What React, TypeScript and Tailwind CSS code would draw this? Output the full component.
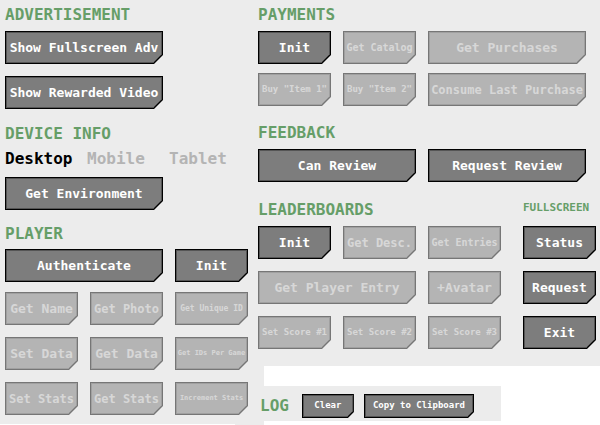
import React from "react";
import clsx from "clsx";

type Size = "md" | "sm" | "xs" | "2xs" | "3xs" | "4xs";

const textSizes: Record<Size, string> = {
  md: "text-[13px]",
  sm: "text-[12px]",
  xs: "text-[10px]",
  "2xs": "text-[9px]",
  "3xs": "text-[8px]",
  "4xs": "text-[7px]",
};

type ActionProps = {
  children: React.ReactNode;
  size?: Size;
  wide?: boolean;
  disabled?: boolean;
  compact?: boolean;
};

// Button with its bottom right corner cut off: the outer shape is the outline, the inner one the fill.
function Action({ children, size = "md", wide, disabled, compact }: ActionProps) {
  return (
    <button
      type="button"
      disabled={disabled}
      className={clsx(
        "flex bg-black p-px font-bold whitespace-nowrap text-white disabled:text-[#c2c2c2] disabled:opacity-50",
        compact
          ? "h-6 min-w-[52px] [clip-path:polygon(0_0,100%_0,100%_calc(100%-6px),calc(100%-6px)_100%,0_100%)]"
          : "h-[33px] [clip-path:polygon(0_0,100%_0,100%_calc(100%-9px),calc(100%-9px)_100%,0_100%)]",
        wide && "col-span-2",
        textSizes[size],
      )}
    >
      <span
        className={clsx(
          "flex h-full flex-1 items-center justify-center bg-[#7d7d7d] inset-ring inset-ring-[#555555]",
          compact
            ? "px-2 [clip-path:polygon(0_0,100%_0,100%_calc(100%-6px),calc(100%-6px)_100%,0_100%)]"
            : "[clip-path:polygon(0_0,100%_0,100%_calc(100%-9px),calc(100%-9px)_100%,0_100%)]",
        )}
      >
        {children}
      </span>
    </button>
  );
}

function Heading({ children, small }: { children: React.ReactNode; small?: boolean }) {
  return (
    <h2 className={clsx("font-bold text-[#669e68]", small ? "text-[11px] leading-4" : "text-base leading-5")}>
      {children}
    </h2>
  );
}

export default function App() {
  return (
    <main className="flex min-h-screen bg-[#ececec] font-['DejaVu_Sans_Mono','Liberation_Mono',monospace]">
      <div className="flex w-[258px] shrink-0 flex-col">
        <div className="w-[248px] pt-[5px] pl-[5px]">
          <section>
            <Heading>ADVERTISEMENT</Heading>
            <div className="mt-1.5 grid grid-cols-3 gap-3">
              <Action wide>Show Fullscreen Adv</Action>
              <div />
              <Action wide>Show Rewarded Video</Action>
            </div>
          </section>

          <section className="mt-[15px]">
            <Heading>DEVICE INFO</Heading>
            <ul className="mt-[5px] flex text-base leading-5 font-bold text-[#b4b4b4]">
              <li className="w-[82px] text-black">Desktop</li>
              <li className="w-[82px]">Mobile</li>
              <li>Tablet</li>
            </ul>
            <div className="mt-2 grid grid-cols-3 gap-3">
              <Action wide>Get Environment</Action>
            </div>
          </section>

          <section className="mt-[14px]">
            <Heading>PLAYER</Heading>
            <div className="mt-[5px] grid grid-cols-3 gap-3">
              <Action wide>Authenticate</Action>
              <Action>Init</Action>
            </div>
            <div className="mt-[10px] grid grid-cols-3 gap-3">
              <Action disabled>Get Name</Action>
              <Action disabled size="sm">Get Photo</Action>
              <Action disabled size="3xs">Get Unique ID</Action>
              <Action disabled>Set Data</Action>
              <Action disabled>Get Data</Action>
              <Action disabled size="4xs">Get IDs Per Game</Action>
              <Action disabled size="sm">Set Stats</Action>
              <Action disabled size="sm">Get Stats</Action>
              <Action disabled size="4xs">Increment Stats</Action>
            </div>
          </section>
        </div>
        <div className="mt-[9px] w-[235px] flex-1 bg-white" />
      </div>

      <div className="flex flex-1 flex-col pt-[5px]">
        <section>
          <Heading>PAYMENTS</Heading>
          <div className="mt-1.5 grid w-[328px] grid-cols-4 gap-x-3 gap-y-[9px]">
            <Action>Init</Action>
            <Action disabled size="xs">Get Catalog</Action>
            <Action disabled wide>Get Purchases</Action>
            <Action disabled size="2xs">Buy "Item 1"</Action>
            <Action disabled size="2xs">Buy "Item 2"</Action>
            <Action disabled wide size="sm">Consume Last Purchase</Action>
          </div>
        </section>

        <section className="mt-[17px]">
          <Heading>FEEDBACK</Heading>
          <div className="mt-1.5 grid w-[328px] grid-cols-4 gap-3">
            <Action wide>Can Review</Action>
            <Action wide>Request Review</Action>
          </div>
        </section>

        <div className="mt-[18px] flex gap-[22px]">
          <section className="w-[243px]">
            <Heading>LEADERBOARDS</Heading>
            <div className="mt-1.5 grid grid-cols-3 gap-3">
              <Action>Init</Action>
              <Action disabled size="sm">Get Desc.</Action>
              <Action disabled size="xs">Get Entries</Action>
              <Action disabled wide>Get Player Entry</Action>
              <Action disabled>+Avatar</Action>
              <Action disabled size="2xs">Set Score #1</Action>
              <Action disabled size="2xs">Set Score #2</Action>
              <Action disabled size="2xs">Set Score #3</Action>
            </div>
          </section>
          <section className="w-[73px]">
            <Heading small>FULLSCREEN</Heading>
            <div className="mt-[10px] grid gap-3">
              <Action>Status</Action>
              <Action>Request</Action>
              <Action>Exit</Action>
            </div>
          </section>
        </div>

        <div className="mt-[17px] ml-1.5 h-5 bg-white" />
        <section className="flex">
          <div className="flex w-[243px] items-center pt-2 pb-[3px] pl-0.5">
            <Heading>LOG</Heading>
            <div className="ml-[13px] flex gap-[10px]">
              <Action compact size="2xs">Clear</Action>
              <Action compact size="2xs">Copy to Clipboard</Action>
            </div>
          </div>
          <div className="flex-1 bg-white" />
        </section>
        <div className="ml-1.5 flex-1 bg-white" />
      </div>
    </main>
  );
}
